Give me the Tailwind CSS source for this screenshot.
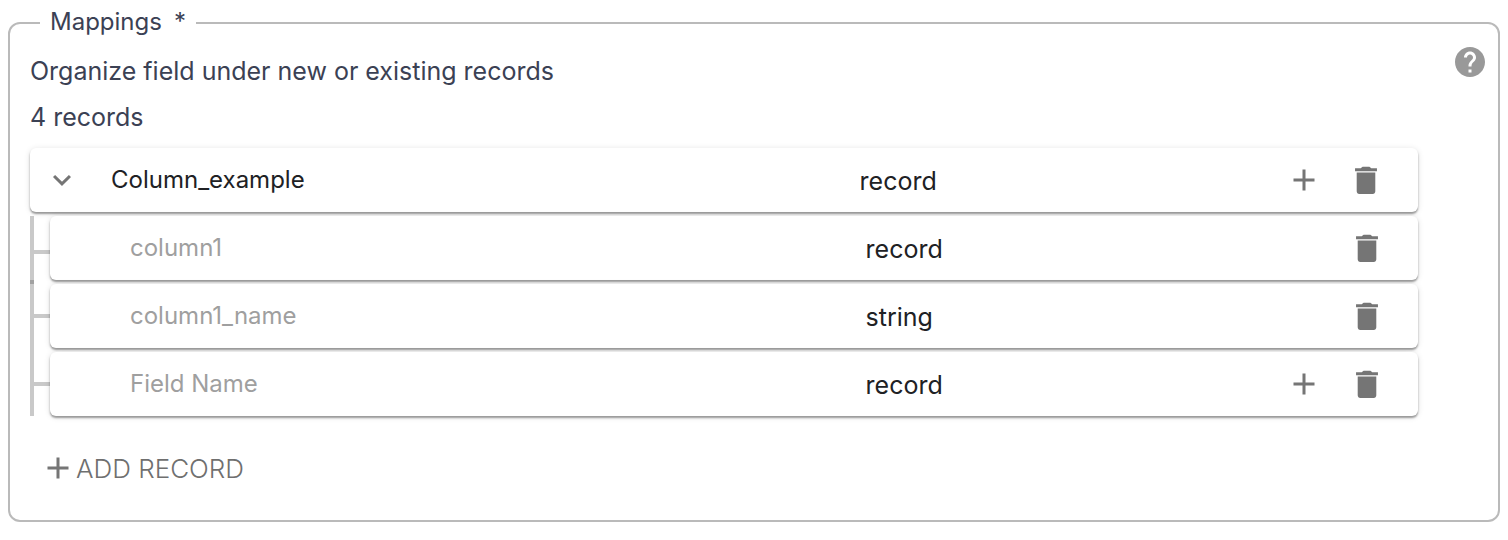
<!DOCTYPE html>
<html lang="en">
<head>
<meta charset="utf-8">
<meta name="viewport" content="width=device-width, initial-scale=1">
<title>Mappings</title>
<script src="https://cdn.jsdelivr.net/npm/@tailwindcss/browser@4"></script>
</head>
<body class="bg-white font-['Inter',sans-serif] text-[#3b4154]">
<svg class="hidden" aria-hidden="true">
  <symbol id="plus" viewBox="0 0 24 24"><path d="M19 13h-6v6h-2v-6H5v-2h6V5h2v6h6z"/></symbol>
  <symbol id="trash" viewBox="0 0 24 24"><path d="M5.800 19.500c0 1 .7 1.800 1.700 1.800h9c1 0 1.700-.8 1.700-1.800V7H5.800zM19.300 4.200H15.500c-.5-.7-1-1.100-1.800-1.100h-3.400c-.8 0-1.300.4-1.800 1.100H4.700v2h14.600z"/></symbol>
</svg>
<fieldset class="mx-2 mt-[7px] flex min-w-0 items-start rounded-xl border-2 border-[#bababa] pr-[10px] pl-5 pb-[33px]">
  <legend class="ml-[10px] flex h-8 items-center gap-3 px-[10px] pb-0.5 text-[24px]"><span>Mappings</span><span>*</span></legend>
  <div class="min-w-0 flex-1 pt-[9px]">
    <p class="text-[25px] leading-[46px]">Organize field under new or existing records</p>
    <p class="text-[25px] leading-[46px]">4 records</p>

    <div class="mt-2 flex flex-col gap-1 text-[#202124]">
      <div class="flex h-16 items-center rounded-md bg-white shadow-[0_2px_2px_rgba(0,0,0,0.36),0_1px_6px_rgba(0,0,0,0.12)]">
        <button type="button" aria-label="Collapse" class="flex w-16 justify-center text-[#757575]">
          <svg class="size-9" viewBox="0 0 24 24" fill="none" stroke="currentColor" stroke-width="2"><path d="M6.700 9.300 12 14.600l5.300-5.300"/></svg>
        </button>
        <input aria-label="Record name" value="Column_example" class="ml-[17px] h-12 min-w-0 flex-1 pb-0.5 text-[24px] outline-none">
        <select aria-label="Record type" class="h-12 w-[30%] appearance-none pt-1 text-[25px] outline-none"><option>record</option><option>string</option></select>
        <div class="flex w-[142px] gap-[26px] pl-[10px] text-[#757575]">
          <button type="button" aria-label="Add field"><svg class="size-9 fill-current"><use href="#plus"/></svg></button>
          <button type="button" aria-label="Delete record"><svg class="size-9 fill-current"><use href="#trash"/></svg></button>
        </div>
      </div>

      <ul class="flex flex-col">
        <li>
          <div class="flex items-start border-l-4 border-[#c9c9c9]">
            <span class="mt-[34px] h-1 w-4 bg-[#c9c9c9]"></span>
            <div class="flex h-16 flex-1 items-center rounded-md bg-white shadow-[0_2px_2px_rgba(0,0,0,0.36),0_1px_6px_rgba(0,0,0,0.12)]">
              <input aria-label="Field name" placeholder="column1" class="ml-20 h-12 min-w-0 flex-1 pb-0.5 text-[24px] outline-none placeholder:text-[#9f9f9f]">
              <select aria-label="Field type" class="h-12 w-[30%] appearance-none pt-1 text-[25px] outline-none"><option>record</option><option>string</option></select>
              <div class="flex w-[142px] pl-[73px] text-[#757575]">
                <button type="button" aria-label="Delete field"><svg class="size-9 fill-current"><use href="#trash"/></svg></button>
              </div>
            </div>
          </div>
          <span class="block size-1 bg-[#a1a1a1]"></span>
        </li>
        <li class="flex items-start border-l-4 border-[#c9c9c9] pb-1">
          <span class="mt-[30px] h-1 w-4 bg-[#c9c9c9]"></span>
          <div class="flex h-16 flex-1 items-center rounded-md bg-white shadow-[0_2px_2px_rgba(0,0,0,0.36),0_1px_6px_rgba(0,0,0,0.12)]">
            <input aria-label="Field name" placeholder="column1_name" class="ml-20 h-12 min-w-0 flex-1 pb-0.5 text-[24px] outline-none placeholder:text-[#9f9f9f]">
            <select aria-label="Field type" class="h-12 w-[30%] appearance-none pt-1 text-[25px] outline-none"><option>string</option><option>record</option></select>
            <div class="flex w-[142px] pl-[73px] text-[#757575]">
              <button type="button" aria-label="Delete field"><svg class="size-9 fill-current"><use href="#trash"/></svg></button>
            </div>
          </div>
        </li>
        <li class="flex items-start border-l-4 border-[#c9c9c9]">
          <span class="mt-[30px] h-1 w-4 bg-[#c9c9c9]"></span>
          <div class="flex h-16 flex-1 items-center rounded-md bg-white shadow-[0_2px_2px_rgba(0,0,0,0.36),0_1px_6px_rgba(0,0,0,0.12)]">
            <input aria-label="Field name" placeholder="Field Name" class="ml-20 h-12 min-w-0 flex-1 pb-0.5 text-[24px] outline-none placeholder:text-[#9f9f9f]">
            <select aria-label="Field type" class="h-12 w-[30%] appearance-none pt-1 text-[25px] outline-none"><option>record</option><option>string</option></select>
            <div class="flex w-[142px] gap-[27px] pl-[10px] text-[#757575]">
              <button type="button" aria-label="Add field"><svg class="size-9 fill-current"><use href="#plus"/></svg></button>
              <button type="button" aria-label="Delete field"><svg class="size-9 fill-current"><use href="#trash"/></svg></button>
            </div>
          </div>
        </li>
      </ul>
    </div>

    <button type="button" class="mt-[34px] ml-[10px] flex items-start text-[26px] leading-9 font-light text-[#6f6f6f]"><svg class="size-9 fill-[#757575]"><use href="#plus"/></svg><span class="pt-px">ADD RECORD</span></button>
  </div>
  <button type="button" aria-label="Help" class="mt-[5px] ml-[34px] text-[#999]">
    <svg class="size-9 fill-current" viewBox="0 0 24 24"><path d="M12 2C6.480 2 2 6.480 2 12s4.480 10 10 10 10-4.480 10-10S17.520 2 12 2zm1 17h-2v-2h2v2zm2.070-7.750-.9.920C13.450 12.900 13 13.500 13 15h-2v-.5c0-1.100.450-2.100 1.170-2.830l1.240-1.260c.370-.360.590-.860.590-1.410 0-1.100-.9-2-2-2s-2 .9-2 2H8c0-2.210 1.790-4 4-4s4 1.790 4 4c0 .880-.360 1.680-.930 2.250z"/></svg>
  </button>
</fieldset>
</body>
</html>
